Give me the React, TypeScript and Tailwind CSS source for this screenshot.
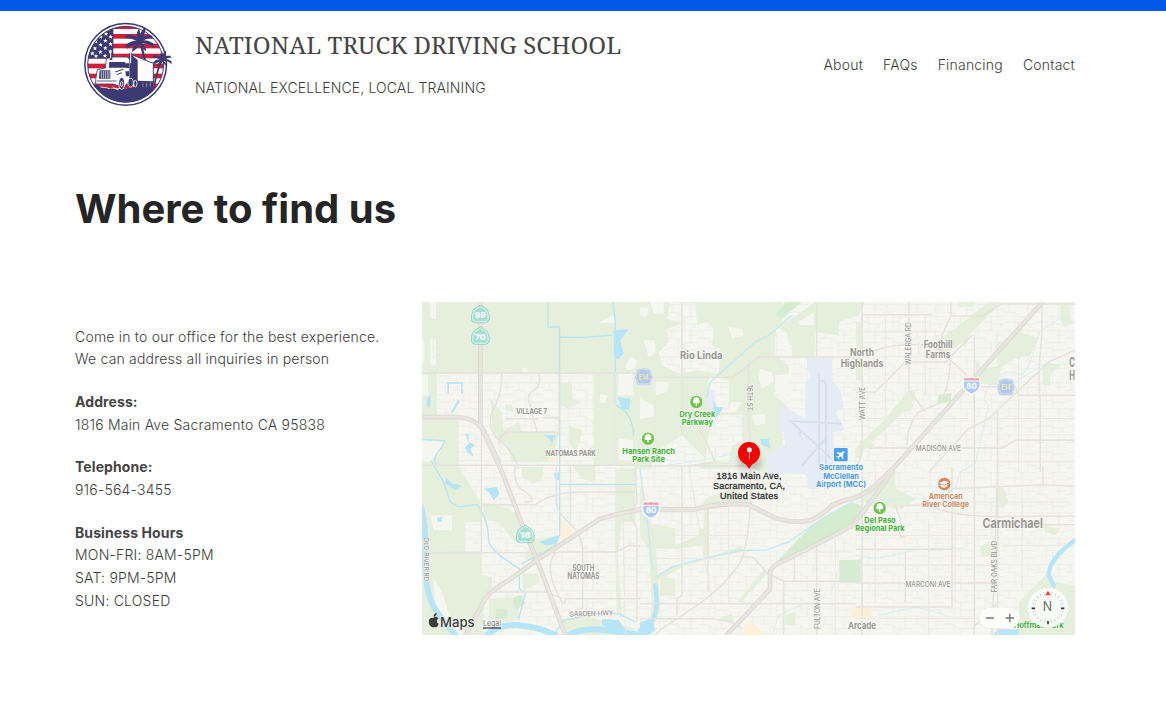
import React from "react";

type LabelProps = {
  x: number;
  y: number;
  w: number;
  size: number;
  fill?: string;
  weight?: number;
  rotate?: number;
  halo?: boolean;
  children: string;
};

function Label({ x, y, w, size, fill = "#9a9794", weight = 650, rotate = 0, halo = true, children }: LabelProps) {
  return (
    <text
      x={x}
      y={y}
      textLength={w}
      lengthAdjust="spacingAndGlyphs"
      textAnchor="middle"
      fontSize={size}
      fontWeight={weight}
      fill={fill}
      stroke={halo ? "#f8f9f4" : "none"}
      strokeWidth={halo ? 4 : 0}
      strokeLinejoin="round"
      paintOrder="stroke"
      transform={rotate ? `rotate(${rotate} ${x} ${y})` : undefined}
    >
      {children}
    </text>
  );
}

function Palm({ x, y, s, trunk }: { x: number; y: number; s: number; trunk: string }) {
  return (
    <g>
      <path d={trunk} fill="none" stroke="#3b3a72" strokeWidth={5 * s + 2} strokeLinecap="round" />
      <g transform={`translate(${x} ${y}) scale(${s})`} fill="#3b3a72">
        <path d="M0 0C-3-14 2-32 18-42C18-30 12-10 4 0Z" />
        <path d="M0-2C8-14 24-22 42-16L36-14L44-8C26-12 12-4 4 4Z" />
        <path d="M0-2C16-6 34-2 46 12L40 12L46 22C32 8 16 6 4 6Z" />
        <path d="M0-2C-8-16-28-24-46-18L-40-14L-48-8C-32-12-14-6-4 4Z" />
        <path d="M0 0C-16-4-36 0-46 20L-36 14L-38 24C-26 12-10 8 2 6Z" />
        <path d="M-2 0C-14 8-22 18-24 32C-12 26-2 14 4 4Z" />
        <path d="M0 0C10 6 18 16 20 30C10 24 2 14-2 4Z" />
        <path d="M-4 0C-12-14-10-28-2-38C4-24 4-10 3 2Z" />
      </g>
    </g>
  );
}

function Logo() {
  const stars = [
    [108, 101], [92, 110], [122, 110], [77, 124], [106, 122], [92, 134], [122, 132],
    [75, 145], [106, 144], [67, 160], [91, 156], [121, 154], [78, 168], [105, 167],
  ];
  return (
    <svg className="h-[85px] w-[92px] shrink-0" viewBox="36 66 276 255" role="img" aria-label="National Truck Driving School">
      <defs>
        <clipPath id="seal"><circle cx="167" cy="193" r="114" /></clipPath>
      </defs>
      <circle cx="167" cy="193" r="122.500" fill="#fff" stroke="#3b3a72" strokeWidth="4.500" />
      <g clipPath="url(#seal)">
        <rect x="50" y="70" width="240" height="250" fill="#fff" />
        {[73, 102, 131, 161, 191, 221, 251].map((y) => (
          <rect key={y} x="50" y={y} width="240" height="14" fill="#d21f3a" />
        ))}
        <rect x="50" y="70" width="80" height="106" fill="#3b3a72" />
        {stars.map(([x, y]) => (
          <path key={`${x}-${y}`} transform={`translate(${x} ${y}) scale(1.1)`} d="M0-6L1.7-2L6-2L2.7 1L4 6L0 3L-4 6L-2.7 1L-6-2L-1.7-2Z" fill="#fff" />
        ))}
        <path d="M45 255H82L94 262L140 268L200 262H290V320H45Z" fill="#3b3a72" />
      </g>
      <circle cx="167" cy="193" r="114" fill="none" stroke="#3b3a72" strokeWidth="3" />
      <Palm x={209} y={124} s={1} trunk="M211 126Q216 145 226 186" />
      <Palm x={277} y={179} s={0.66} trunk="M276 181Q263 205 254 250" />
      <path d="M185 164L250 190V250L187 262Z" fill="#fff" stroke="#3b3a72" strokeWidth="3" />
      <path d="M185 165L203 180V250H187Z" fill="#3b3a72" />
      <path d="M109 177L123 171H172L182 182V238L166 256H142L129 252H77V239L82 209L106 204Z" fill="#fff" stroke="#3b3a72" strokeWidth="2.500" />
      <path d="M118 186H166L170 203H116Z" fill="#3b3a72" />
      <path d="M123 158V180M182 158V236" stroke="#3b3a72" strokeWidth="8" />
      <path d="M122 153V175M182 153V190" stroke="#fff" strokeWidth="3" />
      <path d="M89 211H121V236H87Z" fill="#3b3a72" />
      <path d="M94 212V235M100 212V235M106 212V235M112 212V235M117 212V235" stroke="#fff" strokeWidth="2" />
      <path d="M80 243H140" stroke="#3b3a72" strokeWidth="2.500" />
      <path d="M135 216L160 208M140 224L156 218" stroke="#3b3a72" strokeWidth="3" />
      <path d="M168 190H177V204H168ZM166 214H177V229H168Z" fill="#3b3a72" />
      <path d="M200 242L250 244V264H200Z" fill="#3b3a72" />
      <g fill="#3b3a72" stroke="#fff" strokeWidth="2.500">
        <ellipse cx="155" cy="250" rx="9" ry="18" />
        <ellipse cx="155" cy="252" rx="3.500" ry="8" />
        <ellipse cx="182" cy="248" rx="8" ry="13" />
        <ellipse cx="196" cy="251" rx="5" ry="10" />
      </g>
      <path d="M219 248V261M230 248V261M241 247V260" stroke="#aeadc8" strokeWidth="2" />
      <path d="M91 261L108 263L119 266M128 261L145 270" stroke="#fff" strokeWidth="2.500" />
    </svg>
  );
}

function ParkIcon({ x, y }: { x: number; y: number }) {
  return (
    <g>
      <circle cx={x} cy={y} r="20" fill="#70c44e" stroke="#f6f9f1" strokeWidth="3" />
      <path transform={`translate(${x} ${y})`} d="M-2 11V4H-7A6 6 0 0 1-9-5A9 9 0 0 1 9-5A6 6 0 0 1 7 4H2V11Z" fill="#fff" />
    </g>
  );
}

function StateShield({ x, y, children }: { x: number; y: number; children: string }) {
  return (
    <g>
      <path
        transform={`translate(${x} ${y})`}
        d="M0-29C10-22 16-19 19-16C25-8 28 4 27 14C25 23 18 25 8 24H-8C-18 25-25 23-27 14C-28 4-25-8-19-16C-16-19-10-22 0-29Z"
        fill="#a4dfd1" stroke="#86cfc3" strokeWidth="2"
      />
      <path
        transform={`translate(${x} ${y}) scale(.86)`}
        d="M0-29C10-22 16-19 19-16C25-8 28 4 27 14C25 23 18 25 8 24H-8C-18 25-25 23-27 14C-28 4-25-8-19-16C-16-19-10-22 0-29Z"
        fill="none" stroke="#f4fcf8" strokeWidth="3"
      />
      <Label x={x} y={y + 10} w={33} size={24} weight={800} fill="#fff" halo={false}>{children}</Label>
    </g>
  );
}

function Interstate({ x, y }: { x: number; y: number }) {
  return (
    <g transform={`translate(${x} ${y})`}>
      <path d="M-20-25Q-10-20 0-25Q10-20 20-25Q28-12 25 4Q20 19 0 27Q-20 19-25 4Q-28-12-20-25Z" fill="#acc9f7" stroke="#fff" strokeWidth="4" />
      <path d="M-21-23Q-10-18 0-23Q10-18 21-23L24-14H-24Z" fill="#f2a2a0" />
      <path d="M-25-13H25" stroke="#fff" strokeWidth="3" />
      <Label x={0} y={11} w={32} size={24} weight={700} fill="#fff" halo={false}>80</Label>
    </g>
  );
}

function CountyShield({ x, y }: { x: number; y: number }) {
  return (
    <g transform={`translate(${x} ${y})`}>
      <path d="M-20-23L0-27L20-23L27 1L19 24H-19L-27 1Z" fill="#b1c8ef" stroke="#dfe7f4" strokeWidth="3" />
      <path d="M-17-19L0-23L17-19L22 1L16 20H-16L-22 1Z" fill="none" stroke="#e8e8b8" strokeWidth="2" />
      <Label x={0} y={8} w={29} size={21} weight={700} fill="#eceaad" halo={false}>E14</Label>
    </g>
  );
}

function AreaMap() {
  return (
    <svg className="block h-full w-full" viewBox="0 0 1959 999" preserveAspectRatio="none" fontFamily="Inter, 'Liberation Sans', sans-serif">
      <defs>
        <pattern id="streets" width="92" height="78" patternUnits="userSpaceOnUse">
          <path d="M0 8H52V0M52 8H92M0 31H30L42 44H92M14 8V31M33 31V78M70 8V44M52 44V78M0 60H52M52 66H92M80 66V78M62 22H92" fill="none" stroke="#eeebe6" strokeWidth="2.2" />
        </pattern>
        <filter id="shade" x="-50%" y="-50%" width="200%" height="200%"><feGaussianBlur stdDeviation="9" /></filter>
      </defs>
      <rect width="1959" height="999" fill="#f5f6f0" />
      <rect width="1959" height="999" fill="url(#streets)" />

      {/* Open land */}
      <g fill="#e5efdc">
        <path d="M0 0H1080V70L1180 0H1330L1310 40L1250 60V100L1180 90V165H1110V130L1060 105L1060 160L1100 190V240H1060V280L1110 330L1080 340V430L1060 450L1020 440L990 470H930V500H654L640 500H580V585H640V492H515V215H45V345H110V492L180 610V660H130V750H180V820L210 825V870L185 885V999H0Z" />
        <path d="M580 660V585H640V660ZM578 660H600L588 760L600 940H584Z" />
        <path d="M205 290L240 330L245 385L290 360L300 390H410L400 440L375 480H270L255 430L215 405Z" />
        <path d="M415 240L450 245V290L480 300L440 320L415 310ZM440 370L480 385L465 450L440 420ZM250 305L270 310L275 330L250 325Z" />
        <path d="M180 600L260 620L300 650V700L280 720L230 660L190 650ZM325 715L410 700V740L345 780L310 770ZM300 815L345 815L355 840L305 865ZM200 890L290 885V950L250 960L200 950Z" />
        <path d="M300 495H365L360 530L335 545L300 525ZM450 492H520V540L480 530ZM0 930L60 950L110 999H0ZM420 950L500 945L640 980V999H420Z" />
        <path d="M654 550L675 600L700 730L710 840L715 930L690 980H680L690 900L680 740L654 700ZM670 690L700 665L760 680V730L830 700V680H845V730L765 740H680ZM845 600L870 590L900 600V620H860V760H845ZM715 825L760 830V882H715ZM700 826L770 785L850 770L960 732V750L880 765L780 795L700 840ZM945 900L1020 810L1035 800L1030 820L960 900ZM900 945L930 935L935 960L890 955ZM850 590L930 560L990 590L960 610L850 610ZM1090 940L1120 930V970H1090ZM930 465L1030 440L1120 470V510L1036 515L990 500Z" />
        <path d="M1302 60H1318V235H1302ZM1460 265L1480 270L1475 300L1320 450V468H1300V440L1390 350ZM1560 110L1700 0H1740L1610 130L1560 160ZM1720 130L1790 88L1850 110L1825 160L1780 170L1730 200ZM1655 165L1680 200L1740 190L1725 250L1670 245ZM1870 180L1920 190L1885 215V250H1862V205ZM1440 305L1475 305L1465 330L1442 328ZM1610 0H1660L1650 15H1610ZM1310 415L1350 420L1360 435L1320 440ZM1915 10L1940 0L1945 40L1952 65L1925 75L1915 50Z" />
        <path d="M1302 580L1420 500V560L1480 590L1440 620L1340 610ZM1604 100L1625 80L1640 100L1630 140ZM1725 555L1745 560L1760 600L1740 620L1725 590ZM1865 670L1915 680L1900 700L1870 690ZM1675 735L1705 715V765L1678 760ZM1959 710L1880 790L1890 840L1959 850V999H1790L1792 900L1870 820Z" />
      </g>
      <g fill="#d5ecd0">
        <path d="M1054 790L1130 710L1180 660L1290 600L1340 620L1290 675L1180 725L1090 775ZM1252 774H1317V842H1252ZM222 920H256V950H222ZM272 885L300 880L310 905L280 925ZM1550 280L1588 272L1587 298L1545 306ZM1090 0H1140L1080 50L1060 40Z" />
      </g>
      {/* Built-up patches */}
      <g fill="#f5f6f0">
        <path d="M25 110H42V190H25ZM0 100L8 120V180H0ZM25 0H42V50H25ZM0 220L18 220V280H0ZM300 195L315 200V212H300ZM535 60L550 50L575 40V62H535ZM535 275L555 280L550 302H533ZM625 165L645 175L640 200L610 205L612 190ZM590 215H632V280H588ZM590 410L632 415V475H590ZM0 415L65 420L55 450L20 480L0 475ZM25 640H90V685H35ZM130 725H175V750H130ZM654 15L680 20L675 45L654 40ZM685 0H725V35H695ZM745 0L820 5L825 70L855 60L875 80L870 130L895 140L890 215L830 205L770 215L720 190L710 150L740 120L735 80L780 65L735 50ZM665 115H700V155L680 165ZM920 75L960 80L965 100L930 110ZM1060 75L1095 90L1105 150L1070 140ZM1130 60L1175 30V70H1135ZM695 240H740L735 270L700 280ZM860 225L920 235V330H870L860 280ZM925 300L960 300L940 330H920ZM880 340H960V420L930 430L920 480H850L860 400ZM1015 200L1050 210L1055 240L1020 260L1010 230ZM1060 220L1110 215L1085 300L1060 260ZM990 340L1030 335V365L1000 370ZM690 455L780 400L850 470L830 500H690ZM654 290L695 310V345L654 350ZM60 870L70 900L80 940L140 999H105L40 930L35 830Z" />
        <path d="M45 215H150L168 225V330L100 345H48Z" />
      </g>
      <path d="M25 110H42V190H25ZM745 0L820 5L825 70L855 60L875 80L870 130L895 140L890 215L830 205L770 215L720 190L710 150L740 120ZM860 225L920 235V330H870ZM880 340H960V420L930 430L920 480H850ZM690 455L780 400L850 470L830 500H690ZM45 215H168V330L100 345H48Z" fill="url(#streets)" />

      {/* Airfield */}
      <path d="M1155 168H1232L1230 235L1255 265L1265 315L1240 330L1270 385L1235 390V500L1190 560H1160L1150 515H1036V460L1090 430L1085 390L1070 385V315L1100 318L1150 350V240L1170 225L1155 200ZM860 262L877 265V310L865 330L855 310Z" fill="#e6ecf5" />
      <g fill="none" stroke="#d5dfe9" strokeWidth="5">
        <path d="M1191 212V500M1195 237H1207L1212 248V485M1100 357L1260 365M1105 357L1228 470M1215 405L1140 490M1135 385V405" />
      </g>
      {/* Commercial blocks */}
      <path d="M385 465H412V480H385ZM415 650L445 675L450 690L415 715ZM970 965L990 960L1030 999H970ZM1286 915H1345L1352 930L1340 947H1286Z" fill="#fdf0d8" />

      {/* Water */}
      <g fill="none" stroke="#b6e5f8" strokeLinecap="round" strokeLinejoin="round">
        <path d="M-3 615Q12 670 10 760Q8 880 45 930T100 999M195 999Q230 965 290 970T400 999M440 999Q480 975 560 985L654 999" strokeWidth="18" />
        <path d="M1959 715Q1880 770 1880 820L1895 850M700 850Q710 930 690 955Q670 970 654 985" strokeWidth="13" />
        <path d="M378 0V75H413V700L395 735L300 785M413 105L480 106L570 100M0 413L67 416L60 435Q25 470 45 492M30 480L65 540L85 600L110 615L165 608Q200 650 200 720Q210 750 292 800V860L310 875L290 950M573 0L580 60V310Q632 330 635 400M415 547H640M395 999L425 955L520 935H590L640 960" strokeWidth="4" />
        <path d="M654 500L680 690L690 800M700 826L750 795L840 770L960 745L1030 745L1100 720L1200 650L1290 600M1110 40L1040 100L1000 120L960 155L910 200L865 240L855 285" strokeWidth="4.500" stroke="#c5ebf5" />
        <path d="M654 425Q740 410 790 340T855 260M690 495Q830 480 930 455T1036 450M1302 600L1350 595L1500 590L1600 560L1615 510L1660 485L1700 310Q1670 290 1710 240T1800 220Q1830 190 1850 90L1930 40M1302 760Q1360 775 1410 760T1520 740T1630 740M1370 940L1480 915L1560 935L1580 950M1780 240L1860 190L1940 185M1050 999L1070 940L1160 900M1225 880L1250 800L1320 770" strokeWidth="2.500" stroke="#d3eef0" />
      </g>
      <g fill="#b6e5f8">
        <path d="M76 240H122V275H117V245H81V274H76ZM108 294L114 298L92 333L86 329ZM15 290L27 280L24 317L14 312ZM130 395H140V420L160 428L145 440L155 465L135 450L130 435L140 425ZM365 400L400 398L390 425L382 410ZM575 85L620 82L595 115L605 155L588 170H576ZM587 285L625 290L622 325L600 320ZM45 648L62 643L58 660L46 659ZM72 525L90 545L120 550L100 565L70 545ZM185 560L225 555L232 575L215 595L200 570ZM395 515L412 510V535L400 532ZM350 720L410 700L405 725L370 730ZM875 295L885 315L905 315L880 350L873 345ZM1015 410L1040 410L1045 440L1035 435L1020 430ZM540 950L590 955L612 985L595 990L540 970Z" />
        <path d="M1710 999L1730 982H1790V999ZM654 960L690 950L700 985L680 999H654Z" />
      </g>

      {/* Local and arterial streets */}
      <g fill="none" stroke="#e6e2dd" strokeWidth="4.500" strokeLinejoin="round">
        <path d="M0 213H640L654 226H930Q950 215 1010 165H1302M240 215Q240 280 210 330Q195 370 225 410Q270 440 290 500M350 215Q360 250 335 265T325 310L345 390M230 430Q230 390 270 390H400M250 350H350M360 348H410M411 215V390L385 430M0 490H640M178 370V750L20 752H410M178 608H340Q390 570 480 570H640M280 492Q270 550 310 570Q350 600 310 600" />
        <path d="M403 492V600Q410 640 445 665Q480 700 482 740V920M445 492V660M640 492L645 600L625 640L645 680V960M410 750H580L620 730L654 733M400 752Q370 790 400 860T430 890H654M190 870H370Q400 880 420 890M780 0V400M780 492V880L765 890V940M654 905H1302M654 950H850Q930 950 960 980M858 610V870M985 390V605Q980 720 955 780Q920 840 840 900L720 980L700 999M820 355L880 480L800 492M654 492H980M1184 0V165M980 170V390M955 765L990 765Q1010 780 1030 810L1085 838H1302M1085 838V999M1117 760V838M1184 727V999" />
        <path d="M1320 0V450L1302 510M1461 0V265L1510 330M1322 38H1530M1587 0V40L1560 100V150L1635 220M1350 150Q1400 125 1500 128L1560 145M1450 180H1570L1650 100M1585 175Q1580 270 1550 305L1490 330Q1455 370 1455 430M1302 270H1360L1450 180M1340 438H1740L1780 415H1959M1657 100V999M1590 42H1680L1740 5H1959M1860 0V100Q1845 220 1855 300V510M1727 325V999M1670 254H1780L1790 280H1959M1520 510L1640 380L1700 350L1880 180L1959 145M1320 510V999M1590 500V915H1302M1727 500L1710 999M1302 742H1590M1302 843H1710M1450 610H1520Q1600 650 1790 643H1959M1550 610L1590 560L1860 548L1959 552M1863 550V492M1450 750V900M1420 610L1435 650V705H1450M1785 668H1959M1650 980L1730 900" />
      </g>
      <g fill="none" stroke="#ebe8e4" strokeWidth="3">
        <path d="M45 0V210M580 212V492M600 492L610 999M700 226V500M800 492L870 900M700 700H980M690 770H900M920 500V900M1085 750H1290M1240 710V999M1010 492V600M1302 350H1640M1390 30V440M1510 38V280M1302 90H1590M1490 120V160M1700 350H1959M1790 60V510M1720 480H1959M1360 510V900M1520 650V999M1302 790H1720M1302 700H1700M1600 600V900M1740 730H1930M1800 560V860M1650 600H1940M1302 950H1700M30 750V870" />
      </g>

      {/* Freeways */}
      <g fill="none" strokeLinecap="round" strokeLinejoin="round">
        {[
          ["#dcd7d1", 14],
          ["#e8e4de", 9.5],
        ].map(([stroke, width]) => (
          <g key={stroke} stroke={stroke as string} strokeWidth={width}>
            <path d="M175 0V370L240 510L310 692L345 774L430 999M0 345H100Q155 345 185 385L230 480M130 999L190 890Q215 860 260 835L345 774L535 650Q590 635 654 622H820Q900 600 980 608L1060 648Q1110 665 1165 655Q1200 640 1230 610Q1260 595 1302 587L1350 560L1417 495L1862 0" />
            <path d="M914 999L1044 862V810Q1050 790 1080 780L1184 727L1290 672Q1340 610 1410 510" />
          </g>
        ))}
      </g>

      {/* Route shields */}
      <StateShield x={175} y={38}>99</StateShield>
      <StateShield x={175} y={103}>70</StateShield>
      <StateShield x={310} y={698}>16</StateShield>
      <Interstate x={687} y={623} />
      <Interstate x={1649} y={250} />
      <CountyShield x={665} y={225} />
      <CountyShield x={1752} y={256} />

      {/* Places */}
      <Label x={329} y={336} w={92} size={23}>VILLAGE 7</Label>
      <Label x={446} y={461} w={150} size={23}>NATOMAS PARK</Label>
      <Label x={838} y={171} w={128} size={33}>Rio Linda</Label>
      <Label x={1320} y={163} w={72} size={30}>North</Label>
      <Label x={1320} y={194} w={128} size={30}>Highlands</Label>
      <Label x={1548} y={138} w={86} size={29}>Foothill</Label>
      <Label x={1548} y={167} w={74} size={29}>Farms</Label>
      <Label x={484} y={806} w={65} size={25}>SOUTH</Label>
      <Label x={484} y={832} w={95} size={25}>NATOMAS</Label>
      <Label x={1772} y={679} w={181} size={40}>Carmichael</Label>
      <Label x={1320} y={980} w={84} size={28}>Arcade</Label>
      <Label x={1950} y={195} w={17} size={38}>C</Label>
      <Label x={1950} y={235} w={17} size={38}>H</Label>

      {/* Street names */}
      <Label x={1549} y={448} w={136} size={21} weight={500}>MADISON AVE</Label>
      <Label x={1518} y={854} w={135} size={21} weight={500}>MARCONI AVE</Label>
      <Label x={508} y={942} w={132} size={21} weight={500} rotate={-2}>GARDEN HWY</Label>
      <Label x={975} y={288} w={78} size={21} weight={500} rotate={90}>16TH ST</Label>
      <Label x={1328} y={304} w={100} size={21} weight={500} rotate={-90}>WATT AVE</Label>
      <Label x={1467} y={125} w={128} size={21} weight={500} rotate={-90}>WALERGA RD</Label>
      <Label x={1193} y={920} w={122} size={21} weight={500} rotate={-90}>FULTON AVE</Label>
      <Label x={1725} y={794} w={155} size={21} weight={500} rotate={-90}>FAIR OAKS BLVD</Label>
      <Label x={6} y={772} w={132} size={20} weight={500} rotate={90}>OLD RIVER RD</Label>

      {/* Points of interest */}
      <ParkIcon x={823} y={300} />
      <Label x={826} y={345} w={107} size={24} fill="#42b23c">Dry Creek</Label>
      <Label x={826} y={370} w={94} size={24} fill="#42b23c">Parkway</Label>
      <ParkIcon x={678} y={410} />
      <Label x={680} y={455} w={158} size={24} fill="#42b23c">Hansen Ranch</Label>
      <Label x={680} y={479} w={98} size={24} fill="#42b23c">Park Site</Label>
      <ParkIcon x={1373} y={618} />
      <Label x={1374} y={663} w={94} size={24} fill="#42b23c">Del Paso</Label>
      <Label x={1374} y={688} w={148} size={24} fill="#42b23c">Regional Park</Label>
      <rect x="1236" y="438" width="41" height="40" rx="4" fill="#4d9ff4" />
      <path transform="translate(1257 458) rotate(45)" d="M0-15Q3-13 3-5L13 3V6L3 3L2 10L6 13V15L0 13L-6 15V13L-2 10L-3 3L-13 6V3L-3-5Q-3-13 0-15Z" fill="#fff" />
      <Label x={1257} y={505} w={132} size={24} fill="#4798f4">Sacramento</Label>
      <Label x={1257} y={530} w={107} size={24} fill="#4798f4">McClellan</Label>
      <Label x={1257} y={555} w={150} size={24} fill="#4798f4">Airport (MCC)</Label>
      <circle cx="1567" cy="546" r="20" fill="#d2865e" stroke="#f8f3ec" strokeWidth="3" />
      <path d="M1553 543L1566 536L1581 540L1568 548ZM1557 547V554Q1567 561 1576 553V546L1568 551Z" fill="#fff" />
      <path d="M1554 541V552" stroke="#fff" strokeWidth="2" />
      <Label x={1571} y={591} w={102} size={24} fill="#ca8966">American</Label>
      <Label x={1571} y={616} w={140} size={24} fill="#ca8966">River College</Label>
      <Label x={1850} y={978} w={150} size={22} fill="#42b23c">Hoffman Park</Label>

      {/* Destination pin */}
      <ellipse cx="981" cy="482" rx="38" ry="20" fill="#000" opacity=".22" filter="url(#shade)" />
      <path d="M981 420A33 33 0 0 1 1014 453C1014 470 1003 481 991 487L981 500L971 487C959 481 948 470 948 453A33 33 0 0 1 981 420Z" fill="#f90000" />
      <circle cx="982" cy="443" r="7.5" fill="#fff" />
      <path d="M980.7 450H983.3V470L982 474L980.7 470Z" fill="#ffdddd" />
      <g fontFamily="'Liberation Sans', Arial, sans-serif">
        {[
          ["1816 Main Ave,", 531, 195],
          ["Sacramento, CA,", 561, 216],
          ["United States", 591, 174],
        ].map(([line, y, w]) => (
          <text key={line} x="981" y={y} textLength={w} textAnchor="middle" fontSize="27" fill="#2c2c2c" stroke="#2c2c2c" strokeWidth="0.8">
            {line}
          </text>
        ))}
      </g>

      {/* Zoom and compass controls */}
      <rect x="1673" y="918" width="121" height="60" rx="30" fill="#fcfdfb" fillOpacity=".94" />
      <path d="M1692 948H1716M1751 948H1776M1763.500 935.500V960.500" stroke="#747674" strokeWidth="4" />
      <circle cx="1878" cy="917" r="60" fill="#f9fcf8" fillOpacity=".94" />
      <g stroke="#d0d2ce" strokeWidth="3">
        {[15, 30, 45, 60, 75, 105, 120, 135, 150, 165, 195, 210, 225, 240, 255, 285, 300, 315, 330, 345].map((a) => (
          <path key={a} d="M1878 869V878" transform={`rotate(${a} 1878 917)`} />
        ))}
      </g>
      <path d="M1829 919H1839M1917 919H1927M1878 957V967" stroke="#333" strokeWidth="5" />
      <path d="M1878 866L1886 880H1870Z" fill="#f13b30" />
      <text x="1876" y="926" fontSize="40" fontWeight="400" fill="#6c6e6c" textAnchor="middle" textLength="28" lengthAdjust="spacingAndGlyphs">N</text>

      {/* Attribution */}
      <path d="M42 944C36 943 34 950 27 947C18 951 19 965 26 973C31 978 35 974 39 975C45 979 49 968 50 965C43 961 43 953 49 950C47 945 44 944 42 944ZM35 944C34 938 39 933 44 932C44 938 40 944 35 944Z" fill="#3c3c3c" />
      <Label x={106} y={976} w={104} size={41} weight={500} fill="#3c3c3c">Maps</Label>
      <Label x={210} y={972} w={54} size={23} weight={400} fill="#777">Legal</Label>
      <path d="M183 978H237" stroke="#111" strokeWidth="3" />
    </svg>
  );
}

const nav = ["About", "FAQs", "Financing", "Contact"];

const details: { title?: string; lines: string[] }[] = [
  { lines: ["Come in to our office for the best experience.", "We can address all inquiries in person"] },
  { title: "Address:", lines: ["1816 Main Ave Sacramento CA 95838"] },
  { title: "Telephone:", lines: ["916-564-3455"] },
  { title: "Business Hours", lines: ["MON-FRI: 8AM-5PM", "SAT: 9PM-5PM", "SUN: CLOSED"] },
];

export default function App() {
  return (
    <div className="h-[705px] w-full overflow-hidden bg-white font-['Inter',sans-serif] text-[14px] font-light text-[#3c3c3c]">
      <div className="h-[11px] bg-[#0059e7]" />
      <div className="ml-[75px] w-[1000px]">
        <header className="flex h-[106px] items-center justify-between">
          <div className="flex items-center pl-[7px]">
            <Logo />
            <div className="ml-[21px] flex flex-col gap-[15px]">
              <div className="whitespace-nowrap font-['Noto_Serif','DejaVu_Serif_Condensed',serif] text-[24px] font-normal leading-[32px] tracking-[0.12px] text-[#454545]">
                NATIONAL TRUCK DRIVING SCHOOL
              </div>
              <div className="leading-[23px] tracking-[0.12px]">NATIONAL EXCELLENCE, LOCAL TRAINING</div>
            </div>
          </div>
          <nav className="flex gap-5 tracking-[0.2px]">
            {nav.map((item) => (
              <a key={item} href="#">{item}</a>
            ))}
          </nav>
        </header>
        <h1 className="mt-[68px] text-[40px] font-bold leading-[48px] text-[#252525]">Where to find us</h1>
        <main className="mt-[69px] flex items-start">
          <div className="flex w-[347px] flex-col gap-5 whitespace-nowrap pt-[23.5px] leading-[22.7px] tracking-[0.2px]">
            {details.map((block) => (
              <div key={block.lines[0]}>
                {block.title && <div className="font-bold tracking-[0.1px] text-[#454545]">{block.title}</div>}
                {block.lines.map((line) => (
                  <div key={line}>{line}</div>
                ))}
              </div>
            ))}
          </div>
          <div className="h-[333px] w-[653px] overflow-hidden">
            <AreaMap />
          </div>
        </main>
      </div>
    </div>
  );
}
